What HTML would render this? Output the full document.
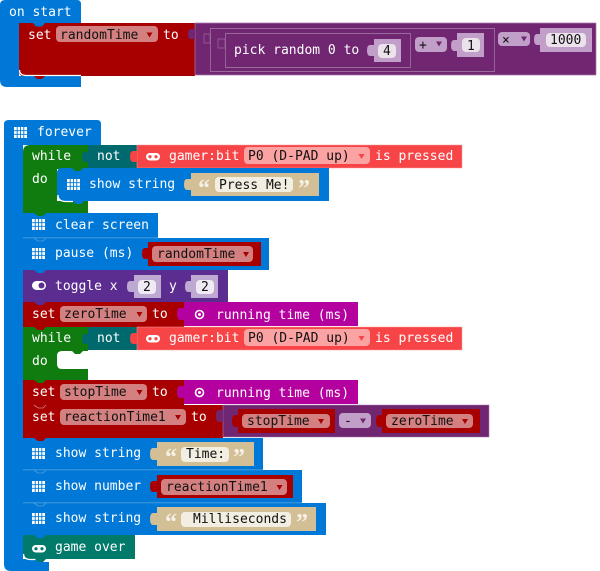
<!DOCTYPE html>
<html><head><meta charset="utf-8"><style>
html,body{margin:0;padding:0;background:#fff;width:600px;height:571px;overflow:hidden}
svg{display:block}
text{font-family:"DejaVu Sans Mono","Liberation Mono",monospace;font-size:13px;fill:#fff;white-space:pre}
.d{fill:#111}
text.q{font-family:"Liberation Serif",serif;font-size:24px;font-weight:bold;fill:#f6f1e6}
</style></head><body>
<svg width="600" height="571" viewBox="0 0 600 571" xmlns="http://www.w3.org/2000/svg">
<defs>
<g id="grid"><rect width="13" height="11" fill="#fff"/><path d="M3.2 0v11M6.500 0v11M9.800 0v11M0 3.700h13M0 7.300h13" stroke="currentColor" stroke-width=".9"/></g>
<g id="pad"><rect width="14" height="7.500" rx="3.700" fill="#fff"/><circle cx="4" cy="3.700" r="1.600" fill="currentColor"/><circle cx="10" cy="3.700" r="1.600" fill="currentColor"/></g>
<path id="dn" d="M-3-2h6l-3 5z"/>
</defs>

<!-- on start -->
<path d="M5 0H77q4 0 4 4V24H19V76H81V87H7Q0 87 0 80V5Q0 0 5 0Z" fill="#0078d7"/>
<path d="M19 23H195V76H22q-3-1-3-6Z" fill="#a80000"/>
<path d="M19.500 70q0 5 6 5.500H81" fill="none" stroke="#fff" stroke-width="1.200"/>
<path d="M34 76l3 3h5l3-3Z" fill="#a80000"/>
<path d="M33 23l3 3.500h6l3-3.500Z" fill="#0078d7"/>
<path d="M195 23H596V75H195Z" fill="#712672" stroke="#a67aa7" stroke-width=".7"/>
<path d="M195 29h-4q-3 0-3 5t3 5h4Z" fill="#712672"/>
<path d="M210.500 28.500H494.500V71.500H210.500Z" fill="none" stroke="#9a6a9b" stroke-width=".9"/>
<path d="M225.500 33.500H410.500V67.500H225.500Z" fill="none" stroke="#9a6a9b" stroke-width=".9"/>
<path d="M204 34h6v9h-6ZM218 39h7v9h-7Z" fill="#712672" stroke="#9a6a9b" stroke-width=".7"/>
<text x="9" y="16">on start</text>
<text x="28" y="39">set</text>
<rect x="56" y="26" width="102" height="16" rx="4" fill="#d48080"/>
<text class="d" x="60" y="39">randomTime</text>
<use href="#dn" x="149.500" y="34.500" fill="#a80000"/>
<text x="163" y="39">to</text>
<text x="234" y="54">pick random 0 to</text>
<path d="M374 45h-4q-3 0-3 5.500t3 5.500h4Z" fill="#c19fc8"/><rect x="374" y="39" width="27" height="23" fill="#c19fc8"/>
<rect x="378" y="44" width="18" height="14" rx="4" fill="#ebe2ec"/>
<text class="d" x="383" y="55">4</text>
<rect x="415" y="37" width="32" height="15" rx="4" fill="#c19fc8"/>
<text class="d" x="419" y="49">+</text><use href="#dn" x="439" y="43.500" fill="#712672"/>
<path d="M457 40h-3q-3 0-3 5.500t3 5.500h3Z" fill="#c19fc8"/><rect x="457" y="33" width="27" height="24" fill="#c19fc8"/>
<rect x="462" y="38" width="18" height="14" rx="4" fill="#ebe2ec"/>
<text class="d" x="467" y="50">1</text>
<rect x="498" y="32" width="32" height="14" rx="4" fill="#c19fc8"/>
<text class="d" x="502" y="44">×</text><use href="#dn" x="524" y="38.500" fill="#712672"/>
<path d="M540 34h-3q-3 0-3 5.500t3 5.500h3Z" fill="#c19fc8"/><rect x="540" y="28" width="52" height="24" fill="#c19fc8"/>
<rect x="546" y="33" width="40" height="14" rx="4" fill="#ebe2ec"/>
<text class="d" x="550" y="44">1000</text>

<!-- forever -->
<path d="M9 120H97q4 0 4 4V145H23V558H4V124q0-4 5-4Z" fill="#0078d7"/>
<path d="M4 550H23V559H36l2 3H49V571H11Q4 571 4 564Z" fill="#0078d7"/>
<use href="#grid" x="14" y="127" color="#0078d7"/>
<text x="37" y="136">forever</text>

<!-- while 1 -->
<path d="M30 145H88V169H57V201H88V213H46l-3 3h-5l-4-3H23V152q0-7 7-7Z" fill="#107c10"/>
<path d="M88 145H137V168H88Z" fill="#00696e"/>
<path d="M88 152h-3q-3 0-3 5t3 5h3Z" fill="#00696e"/>
<path d="M137 145H462V168H137Z" fill="#f64447" stroke="#f99" stroke-width=".5"/>
<path d="M137 151h-4q-3 0-3 5.500t3 5.500h4Z" fill="#f64447"/>
<text x="32" y="160">while</text><text x="97" y="160">not</text>
<use href="#pad" x="146" y="153" color="#f64447"/>
<text x="169" y="160">gamer:bit</text>
<rect x="244" y="147" width="126" height="17" rx="4" fill="#fba2a3"/>
<text class="d" x="248" y="160">P0 (D-PAD up)</text><use href="#dn" x="361.500" y="156" fill="#f64447"/>
<text x="375" y="160">is pressed</text>
<text x="32" y="183">do</text>
<path d="M62 168H329V201H84l-3 3h-5l-3-3H64q-7 0-7-7V173q0-5 5-5Z" fill="#0078d7"/>
<path d="M72 168l3 3h5l3-3Z" fill="#107c10"/>
<path d="M58 195q0 6 7 6.500h8" fill="none" stroke="#fff" stroke-width="1.300"/>
<use href="#grid" x="67" y="179" color="#0078d7"/>
<text x="89" y="188">show string</text>
<path d="M191 179h-4q-3 0-3 5.500t3 5.500h4Z" fill="#d3bf96"/><rect x="191" y="173" width="128" height="23" fill="#d3bf96"/>
<text class="q" x="198" y="196">“</text>
<rect x="215" y="177" width="78" height="15" rx="4" fill="#f3eee2"/>
<text class="d" x="219" y="189">Press Me!</text>
<text class="q" x="298" y="196">”</text>

<!-- clear, pause -->
<rect x="23" y="213" width="135" height="25" fill="#0078d7"/>
<path d="M34 213l4 3h5l3-3Z" fill="#107c10"/>
<use href="#grid" x="32" y="219" color="#0078d7"/>
<text x="55" y="229">clear screen</text>
<rect x="23" y="238" width="246" height="32" fill="#0078d7"/>
<path d="M23 237.800H158" stroke="#4d9fe0" stroke-width=".8"/>
<path d="M34 238l4 3h5l3-3" fill="none" stroke="#4d9fe0" stroke-width=".8"/>
<use href="#grid" x="32" y="248" color="#0078d7"/>
<text x="55" y="257">pause (ms)</text>
<path d="M148 248h-3q-3 0-3 5.500t3 5.500h3Z" fill="#a80000"/><rect x="148" y="242" width="113" height="24" fill="#a80000"/>
<rect x="152" y="246" width="101" height="16" rx="4" fill="#d48080"/>
<text class="d" x="157" y="258">randomTime</text><use href="#dn" x="246" y="254" fill="#a80000"/>

<!-- toggle -->
<rect x="23" y="270" width="205" height="32" fill="#5c2d91"/>
<path d="M34 270l4 3h5l3-3Z" fill="#0078d7"/>
<rect x="32" y="281" width="14" height="9" rx="4.500" fill="#fff"/><circle cx="41.500" cy="285.500" r="3" fill="#5c2d91"/>
<text x="55" y="290">toggle x</text>
<path d="M134 281h-4q-3 0-3 5.500t3 5.500h4Z" fill="#bea9d3"/><rect x="134" y="275" width="27" height="23" fill="#bea9d3"/>
<rect x="138" y="280" width="18" height="14" rx="4" fill="#efeaf4"/>
<text class="d" x="143" y="291">2</text>
<text x="169" y="290">y</text>
<path d="M191 281h-3q-3 0-3 5.500t3 5.500h3Z" fill="#bea9d3"/><rect x="191" y="275" width="27" height="23" fill="#bea9d3"/>
<rect x="196" y="280" width="18" height="14" rx="4" fill="#efeaf4"/>
<text class="d" x="201" y="291">2</text>

<!-- set zeroTime -->
<rect x="23" y="302" width="161" height="25" fill="#a80000"/>
<path d="M34 302l4 3h5l3-3Z" fill="#5c2d91"/>
<text x="32" y="318">set</text>
<rect x="60" y="306" width="87" height="16" rx="4" fill="#d48080"/>
<text class="d" x="64" y="318">zeroTime</text><use href="#dn" x="139.500" y="314" fill="#a80000"/>
<text x="152" y="318">to</text>
<path d="M184 302H358V326H184v-6h-4q-3 0-3-6t3-6h4Z" fill="#b4009e"/>
<circle cx="199.500" cy="314.500" r="4" fill="none" stroke="#fff" stroke-width="1.600"/><circle cx="199.500" cy="314.500" r="1.500" fill="#fff"/>
<text x="216" y="319">running time (ms)</text>

<!-- while 2 -->
<path d="M23 327H88V351H62q-5 0-5 5V364q0 5 5 5H88V380H46l-3 3h-5l-4-3H23Z" fill="#107c10"/>
<path d="M34 327l4 3h5l3-3Z" fill="#a80000"/>
<path d="M72 351l3 3h5l3-3Z" fill="#107c10"/>
<path d="M88 327H137V350H88Z" fill="#00696e"/>
<path d="M88 334h-3q-3 0-3 5t3 5h3Z" fill="#00696e"/>
<path d="M137 327H462V350H137Z" fill="#f64447" stroke="#f99" stroke-width=".5"/>
<path d="M137 333h-4q-3 0-3 5.500t3 5.500h4Z" fill="#f64447"/>
<text x="32" y="342">while</text><text x="97" y="342">not</text>
<use href="#pad" x="146" y="335" color="#f64447"/>
<text x="169" y="342">gamer:bit</text>
<rect x="244" y="329" width="126" height="17" rx="4" fill="#fba2a3"/>
<text class="d" x="248" y="342">P0 (D-PAD up)</text><use href="#dn" x="361.500" y="338" fill="#f64447"/>
<text x="375" y="342">is pressed</text>
<text x="32" y="365">do</text>

<!-- set stopTime -->
<rect x="23" y="380" width="161" height="25" fill="#a80000"/>
<path d="M34 380l4 3h5l3-3Z" fill="#107c10"/>
<text x="32" y="396">set</text>
<rect x="60" y="384" width="87" height="16" rx="4" fill="#d48080"/>
<text class="d" x="64" y="396">stopTime</text><use href="#dn" x="139.500" y="392" fill="#a80000"/>
<text x="152" y="396">to</text>
<path d="M184 380H358V404H184v-6h-4q-3 0-3-6t3-6h4Z" fill="#b4009e"/>
<circle cx="199.500" cy="392.500" r="4" fill="none" stroke="#fff" stroke-width="1.600"/><circle cx="199.500" cy="392.500" r="1.500" fill="#fff"/>
<text x="216" y="397">running time (ms)</text>

<!-- set reactionTime1 -->
<rect x="23" y="405" width="200" height="33" fill="#a80000"/>
<path d="M34 405l4 3h5l3-3" fill="none" stroke="#d48080" stroke-width=".8"/>
<text x="32" y="421">set</text>
<rect x="60" y="409" width="126" height="16" rx="4" fill="#d48080"/>
<text class="d" x="64" y="421">reactionTime1</text><use href="#dn" x="178" y="417" fill="#a80000"/>
<text x="191" y="421">to</text>
<path d="M223 405H489V437H223Z" fill="#712672" stroke="#a67aa7" stroke-width=".6"/>
<path d="M223 410h-4q-3 0-3 6t3 6h4Z" fill="#712672"/>
<path d="M34 438l4 3h5l3-3Z" fill="#a80000"/>
<path d="M238 415h-3q-3 0-3 6t3 6h3Z" fill="#a80000"/><rect x="238" y="409" width="97" height="24" fill="#a80000"/>
<rect x="242" y="414" width="88" height="14" rx="4" fill="#d48080"/>
<text class="d" x="247" y="425">stopTime</text><use href="#dn" x="321" y="421" fill="#a80000"/>
<rect x="339" y="413" width="32" height="15" rx="4" fill="#c19fc8"/>
<text class="d" x="344" y="425">-</text><use href="#dn" x="363" y="420.500" fill="#712672"/>
<path d="M382 415h-3q-3 0-3 6t3 6h3Z" fill="#a80000"/><rect x="382" y="409" width="98" height="24" fill="#a80000"/>
<rect x="386" y="414" width="87" height="14" rx="4" fill="#d48080"/>
<text class="d" x="391" y="425">zeroTime</text><use href="#dn" x="465" y="421" fill="#a80000"/>

<!-- show string Time -->
<rect x="23" y="438" width="240" height="32" fill="#0078d7"/>
<path d="M34 438l4 3h5l3-3Z" fill="#a80000"/>
<use href="#grid" x="32" y="448" color="#0078d7"/>
<text x="55" y="457">show string</text>
<path d="M157 448h-4q-3 0-3 6t3 6h4Z" fill="#d3bf96"/><rect x="157" y="442" width="97" height="24" fill="#d3bf96"/>
<text class="q" x="165" y="465">“</text>
<rect x="181" y="447" width="48" height="15" rx="4" fill="#f3eee2"/>
<text class="d" x="186" y="458">Time:</text>
<text class="q" x="233" y="465">”</text>

<!-- show number -->
<rect x="23" y="470" width="279" height="33" fill="#0078d7"/>
<path d="M23 469.800H263M34 470l4 3h5l3-3" fill="none" stroke="#4d9fe0" stroke-width=".8"/>
<use href="#grid" x="32" y="481" color="#0078d7"/>
<text x="55" y="490">show number</text>
<path d="M157 481h-4q-3 0-3 5.500t3 5.500h4Z" fill="#a80000"/><rect x="157" y="475" width="136" height="23" fill="#a80000"/>
<rect x="161" y="479" width="126" height="16" rx="4" fill="#d48080"/>
<text class="d" x="166" y="491">reactionTime1</text><use href="#dn" x="279.500" y="487" fill="#a80000"/>

<!-- show string ms -->
<rect x="23" y="503" width="303" height="32" fill="#0078d7"/>
<path d="M23 502.800H302M34 503l4 3h5l3-3" fill="none" stroke="#4d9fe0" stroke-width=".8"/>
<use href="#grid" x="32" y="513" color="#0078d7"/>
<text x="55" y="522">show string</text>
<path d="M157 513h-4q-3 0-3 6t3 6h4Z" fill="#d3bf96"/><rect x="157" y="507" width="159" height="24" fill="#d3bf96"/>
<text class="q" x="165" y="530">“</text>
<rect x="181" y="512" width="110" height="15" rx="4" fill="#f3eee2"/>
<text class="d" x="193" y="523">Milliseconds</text>
<text class="q" x="296" y="530">”</text>

<!-- game over -->
<path d="M23 535H135V559H46l-3 3h-5l-3-3H29q-6 0-6-6Z" fill="#007a6b"/>
<path d="M23.500 554q0 5 6 5.500h6" fill="none" stroke="#fff" stroke-width="1.300"/>
<path d="M34 535l4 3h5l3-3Z" fill="#0078d7"/>
<use href="#pad" x="32" y="545" color="#007a6b"/>
<text x="55" y="551">game over</text>
</svg>
</body></html>
